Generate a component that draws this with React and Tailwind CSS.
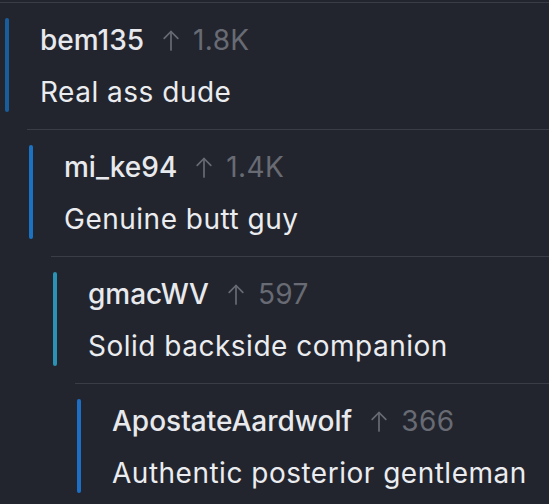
import React from "react";

function Arrow() {
  return (
    <svg width="16" height="21" viewBox="0 0 16 21" fill="none" stroke="#686b73" strokeWidth="1.7" strokeLinecap="round" strokeLinejoin="round" className="mr-[14px] mt-[1px]">
      <path d="M8 20V1.5" />
      <path d="M1.2 8.3L8 1.5l6.8 6.8" />
    </svg>
  );
}

function Comment({ rowClass, barClass, textClass, user, score, body }) {
  return (
    <div className={"border-t border-[#3a3d46] flex " + rowClass}>
      <div className={"w-[4px] rounded-full mt-[15px] mb-[17px] " + barClass} />
      <div className={"flex flex-col pt-[19px] pb-[19px] " + textClass}>
        <div className="flex items-center h-[36px]">
          <span className="text-[28px] leading-[36px] font-medium text-[#e8e9ec] mr-[19px]">{user}</span>
          <Arrow />
          <span className="text-[28px] leading-[36px] tracking-[0.4px] text-[#686b73]">{score}</span>
        </div>
        <div className="mt-[16px] text-[28px] leading-[36px] tracking-[0.5px] text-[#ebecef] whitespace-nowrap">{body}</div>
      </div>
    </div>
  );
}

export default function App() {
  return (
    <div className="w-[549px] h-[504px] overflow-hidden bg-[#22252e] pt-[2px]" style={{ fontFamily: "Inter, 'Noto Sans', sans-serif" }}>
      <Comment rowClass="ml-0" barClass="ml-[5px] bg-[#1a5d9c]" textClass="ml-[31px]" user="bem135" score="1.8K" body="Real ass dude" />
      <Comment rowClass="ml-[27px]" barClass="ml-[2px] bg-[#1c72c2]" textClass="ml-[31px]" user="mi_ke94" score="1.4K" body="Genuine butt guy" />
      <Comment rowClass="ml-[51px]" barClass="ml-[2px] bg-[#2a92b4]" textClass="ml-[31px]" user="gmacWV" score="597" body="Solid backside companion" />
      <Comment rowClass="ml-[75px]" barClass="ml-[2px] bg-[#1d6fc6]" textClass="ml-[31px]" user="ApostateAardwolf" score="366" body="Authentic posterior gentleman" />
    </div>
  );
}
